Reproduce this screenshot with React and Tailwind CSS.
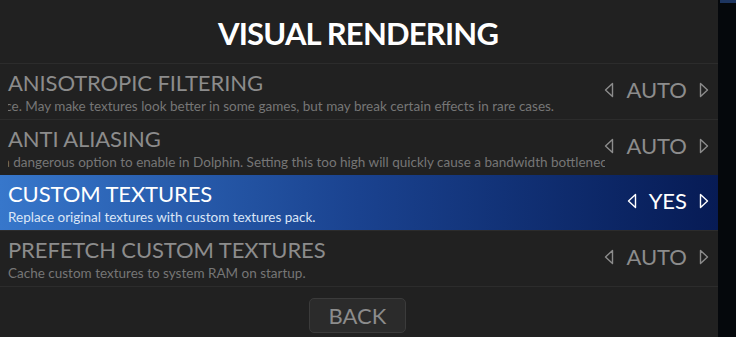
import React from 'react';

const rows = [
  {
    title: 'ANISOTROPIC FILTERING',
    desc: 'ance. May make textures look better in some games, but may break certain effects in rare cases.',
    shift: '-ml-[17px]',
    value: 'AUTO',
  },
  {
    title: 'ANTI ALIASING',
    desc: 'a dangerous option to enable in Dolphin. Setting this too high will quickly cause a bandwidth bottleneck and slow things down.',
    shift: '-ml-[5px]',
    value: 'AUTO',
  },
  {
    title: 'CUSTOM TEXTURES',
    desc: 'Replace original textures with custom textures pack.',
    shift: '',
    value: 'YES',
    selected: true,
  },
  {
    title: 'PREFETCH CUSTOM TEXTURES',
    desc: 'Cache custom textures to system RAM on startup.',
    shift: '',
    value: 'AUTO',
  },
];

function Arrow({ dir }) {
  return (
    <svg width="10" height="16" viewBox="0 0 10 16" className="shrink-0">
      {dir === 'left' ? (
        <path d="M8.5 1.5 L1.5 8 L8.5 14.5 Z" fill="none" stroke="currentColor" strokeWidth="1.4" strokeLinejoin="round" />
      ) : (
        <path d="M1.5 1.5 L8.5 8 L1.5 14.5 Z" fill="none" stroke="currentColor" strokeWidth="1.4" strokeLinejoin="round" />
      )}
    </svg>
  );
}

function SettingRow({ row }) {
  const sel = row.selected;
  return (
    <div
      className={`flex items-center ${
        sel
          ? 'h-[55px] bg-gradient-to-r from-[#3777cb] via-[#1a428f] to-[#071b55] text-white'
          : 'h-[56px] border-t border-[#2c2c2c] text-[#8c8c8c]'
      }`}
    >
      <div className="flex-1 min-w-0 pl-[8px] pt-[2px]">
        <div className="text-[22px] leading-[26px] tracking-[-0.1px]">{row.title}</div>
        <div className="w-[597px] overflow-hidden">
          <div className={`whitespace-nowrap text-[13.5px] leading-[20px] ${row.shift} ${sel ? 'text-[#dbe6f7]' : 'text-[#767676]'}`}>
            {row.desc}
          </div>
        </div>
      </div>
      <div className={`flex items-center gap-[12px] pr-[9px] pb-[3px] ${sel ? 'text-white' : 'text-[#8c8c8c]'}`}>
        <Arrow dir="left" />
        <span className="text-[22px] leading-[26px]">{row.value}</span>
        <Arrow dir="right" />
      </div>
    </div>
  );
}

export default function App() {
  return (
    <div className="w-[736px] h-[337px] flex bg-[#05080c] overflow-hidden" style={{ fontFamily: 'Lato, "Open Sans", sans-serif' }}>
      <div className="w-[718px] bg-[#212121] flex flex-col">
        <div className="h-[63px] flex items-center justify-center">
          <h1 className="text-[31px] font-bold text-white tracking-[-0.8px] mt-[3px] pr-[2px]">VISUAL RENDERING</h1>
        </div>
        {rows.map((row) => (
          <SettingRow key={row.title} row={row} />
        ))}
        <div className="border-t border-[#2c2c2c] flex justify-center pt-[11px] pr-[3px]">
          <button className="w-[97px] h-[35px] rounded-[5px] bg-[#2b2b2b] border border-[#3b3b3b] text-[#8c8c8c] text-[22px] leading-none pt-[1px]">
            BACK
          </button>
        </div>
      </div>
      <div className="flex-1 flex flex-col">
        <div className="h-[3px] ml-[2px] bg-[#1d3560]" />
      </div>
    </div>
  );
}
